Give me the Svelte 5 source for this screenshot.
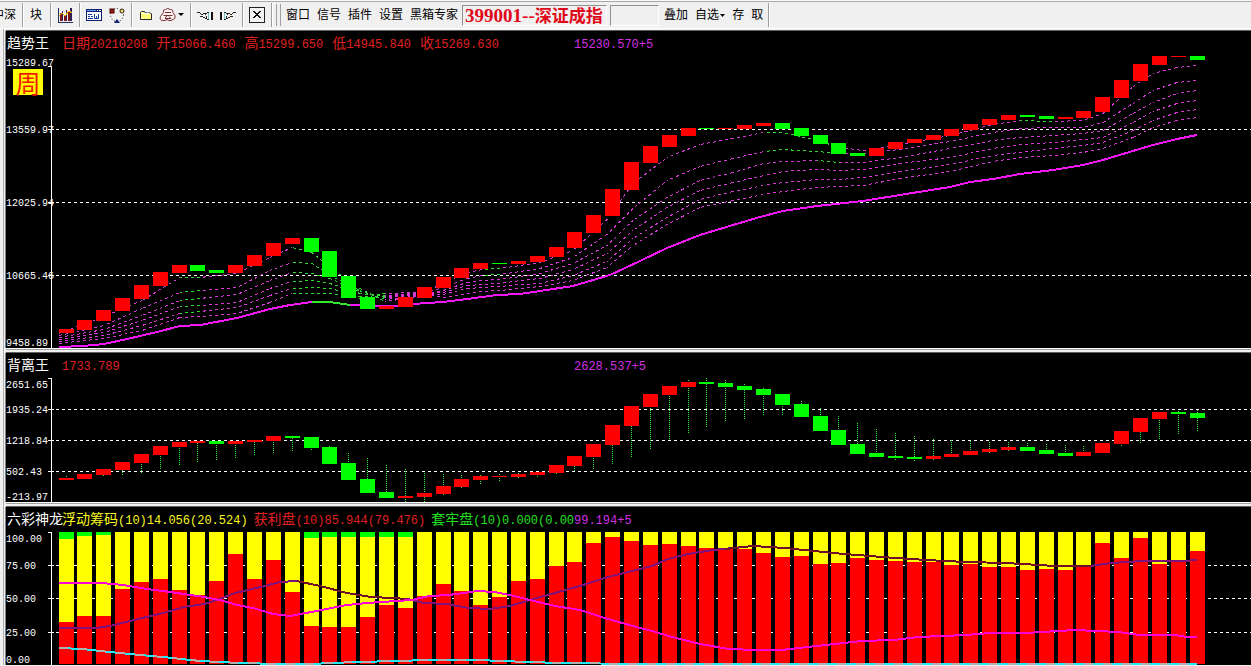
<script>
  const barX = (i) => Math.floor(59 + 18.85 * i);

  // [top, bottom, falling]
  const trend = [
    [329,333],[320,330],[310,321],[298,311],[285,299],[272,286],[265,273],[265,271,1],[270,273,1],[265,273],
    [255,266],[243,256],[238,244],[238,252,1],[251,277,1],[276,298,1],[297,309,1],[306,309],[297,307],[287,298],
    [277,288],[268,278],[263,269],[263,264,1],[261,264],[256,262],[247,257],[232,248],[215,233],[189,216],
    [162,190],[146,163],[135,147],[128,136],[128,129,1],[128,129],[125,129],[123,126],[123,129,1],[128,136,1],
    [135,144,1],[143,154,1],[153,156,1],[148,156],[142,149],[139,143],[135,140],[129,136],[124,130],[119,125],
    [115,120],[115,117,1],[116,119,1],[117,119],[111,118],[97,112],[80,98],[64,81],[56,65],[56,57],[56,60,1]
  ];

  // [x, six averages from fast to slow]
  const ribbon = [
    [59,333,335,337,339,341,343],[104,316,325,329,332,335,338],[142,300,308,315,320,325,330],
    [180,277,292,300,306,313,317],[200,277,290,298,305,311,316],[237,273,287,294,302,307,313],
    [270,257,270,280,288,295,302],[292,247,262,272,281,288,293],[312,252,263,273,280,287,293],
    [330,267,275,278,283,288,293],[360,288,290,291,293,296,298],[385,301,299,297,296,295,293],
    [413,297,296,295,294,293,292],[443,283,287,290,292,294,297],[467,272,278,282,285,288,293],
    [483,269,275,280,284,287,291],[500,268,274,279,283,286,290],[520,265,271,276,280,284,288],
    [540,262,268,273,278,283,286],[573,250,257,263,269,275,280],[607,219,234,245,253,261,267],
    [633,183,208,220,230,238,245],[667,157,180,197,207,217,224],[700,144,166,180,190,199,207],
    [733,138,158,172,182,191,200],[764,132,151,163,175,185,194],[783,132,149,161,171,182,191],
    [817,140,151,160,169,179,187],[840,147,153,162,170,179,186],[863,150,153,162,169,177,185],
    [900,144,149,157,163,171,178],[950,135,141,148,157,164,171],[993,124,132,140,148,155,161],
    [1020,120,128,137,144,152,157],[1053,121,127,135,142,148,155],[1083,120,127,133,139,145,152],
    [1103,113,122,130,137,142,148],[1133,86,103,113,122,130,137],[1153,73,90,102,111,120,127],
    [1177,67,82,93,103,112,120],[1197,65,80,90,100,109,117]
  ];
  const isGreen = (x, k) =>
    (x === 180 && k < 5) || (x >= 292 && x < 385) || (x === 483 && k < 2) ||
    (x >= 764 && x < 840 && k < 2) || (x === 817 && k === 2) || (x === 1020 && k === 0);
  const segments = [];
  for (let k = 0; k < 6; k++) {
    for (let i = 0; i + 1 < ribbon.length; i++) {
      const a = ribbon[i], b = ribbon[i + 1];
      segments.push({ x1: a[0], y1: a[k + 1], x2: b[0], y2: b[k + 1], green: isGreen(a[0], k) });
    }
  }

  const base = '59,347 83,346 104,344 127,339 157,332 180,326 200,325 237,318 270,309 290,305 312,302 330,302 350,305 393,306 413,304 443,302 467,299 497,295 520,294 540,291 573,286 610,275 640,261 667,248 700,235 733,225 760,217 783,211 817,206 863,201 900,195 950,187 970,182 993,179 1020,174 1053,170 1083,165 1103,160 1133,151 1153,145 1177,139 1197,135';

  // [top, bottom, falling, wick top, wick bottom]
  const diverge = [
    [478,480,0,476,480],[474,479,0,474,479],[469,475,0,469,477],[462,470,0,462,475],[454,463,0,454,473],
    [446,455,0,446,469],[442,447,0,442,466],[441,443,0,441,463],[441,444,1,441,460],[441,444,0,441,458],
    [440,442,0,440,456],[436,441,0,436,454],[436,438,1,436,452],[437,448,1,437,451],[447,464,1,446,464],
    [463,480,1,453,480],[479,493,1,458,493],[492,498,1,465,498],[496,498,0,469,502],[493,497,0,473,502],
    [486,494,0,474,496],[479,487,0,475,489],[476,480,0,475,484],[476,477,0,474,481],[474,477,0,473,478],
    [472,475,0,472,477],[465,473,0,465,475],[456,466,0,456,471],[444,457,0,444,469],[425,445,0,425,464],
    [406,426,0,406,457],[394,407,0,394,449],[386,395,0,386,440],[382,387,0,380,433],[382,384,1,378,427],
    [383,387,1,380,422],[386,390,1,384,419],[389,395,1,388,416],[394,405,1,394,415],[404,417,1,401,417],
    [416,431,1,408,431],[430,445,1,416,445],[444,454,1,423,454],[453,457,1,429,457],[456,458,1,433,461],
    [457,459,1,436,461],[456,459,0,439,460],[454,457,0,440,458],[451,455,0,441,455],[449,452,0,442,453],
    [447,450,0,442,451],[447,451,1,443,451],[450,454,1,444,454],[453,456,1,445,456],[452,456,0,446,456],
    [443,453,0,443,453],[431,444,0,431,447],[418,432,0,418,443],[412,419,0,412,439],[412,414,1,411,435],
    [413,418,1,410,432]
  ];

  const profit = [
    622,616,616,589,582,579,590,595,581,554,579,560,592,626,627,627,617,605,608,596,584,591,605,597,581,579,566,562,543,537,
    541,545,544,546,548,549,549,553,557,556,564,563,558,560,561,562,562,565,564,567,567,570,569,570,566,543,558,538,564,561,551
  ];
  const locked = { 0: 539, 1: 536, 2: 535, 13: 538, 14: 537, 15: 537, 16: 537, 17: 537, 18: 537 };

  const purple = '59,628 96,628 110,626 130,621 163,613 184,607 204,604 220,599 235,593 265,586 280,582 297,581 320,586 347,593 371,597 392,598 408,599 424,603 447,604 469,608 490,609 510,606 530,600 551,594 580,586 608,577 640,569 652,566 668,559 688,554 713,550 753,546 785,548 833,553 882,557 926,560 966,562 1006,563 1055,566 1091,566 1111,563 1143,561 1183,561 1197,560';
  const maroon = ['297,581 320,586 347,593 371,597 392,598 408,599', '725,549 753,546 785,548 833,553 882,557 926,560 966,562 1006,563 1055,566 1091,566'];
  const pink = '59,583 102,583 123,585 147,589 163,591 184,594 204,597 220,600 237,605 253,608 273,614 290,616 306,613 347,605 367,603 412,600 429,596 449,595 478,591 494,592 510,595 530,600 555,606 580,610 608,619 640,628 652,631 672,637 700,644 729,649 757,650 781,650 817,646 861,641 894,640 918,637 966,635 990,633 1026,633 1075,630 1119,632 1139,635 1175,635 1187,637 1197,637';
  const cyan = '59,648 82,649 100,651 140,655 163,657 200,661 240,663 280,664 310,664 355,662 400,661 424,660 480,660 500,661 560,663 640,664 1197,664';

  const panels = [
    {
      id: 'trend', name: '趋势王', tone: 'red', latest: '15230.570+5', top: 53, height: 295, axisTop: 66,
      readings: [['日期', '20210208'], ['开', '15066.460'], ['高', '15299.650'], ['低', '14945.840'], ['收', '15269.630']],
      labels: [['15289.67', 62], ['13559.97', 129], ['12025.94', 202], ['10665.46', 275], ['9458.89', 342]],
      grid: [129, 202, 275]
    },
    {
      id: 'diverge', name: '背离王', tone: 'red', latest: '2628.537+5', top: 375, height: 127, axisTop: 378,
      readings: [['', '1733.789']],
      labels: [['2651.65', 384], ['1935.24', 409], ['1218.84', 440], ['502.43', 471], ['-213.97', 496]],
      grid: [409, 440, 471]
    },
    {
      id: 'chips', name: '六彩神龙', tone: 'multi', latest: '99.194+5', top: 529, height: 136, axisTop: 532,
      readings: [['浮动筹码', '(10)14.056(20.524)'], ['获利盘', '(10)85.944(79.476)'], ['套牢盘', '(10)0.000(0.00']],
      labels: [['100.00', 538], ['75.00', 565], ['50.00', 598], ['25.00', 632], ['0.00', 659]],
      grid: [565, 598, 632]
    }
  ];
</script>

<div class="app">
  <header class="toolbar">
    <div class="group first"><button>中深</button></div>
    <div class="group text"><button>块</button></div>
    <div class="group">
      <button aria-label="K线图">
        <svg width="16" height="16" shape-rendering="crispEdges">
          <path d="M1 1v14h15" stroke="#203060" fill="none" />
          <path d="M3 6h2v8h-2zM7 8h2v6h-2zM11 5h2v9h-2z" fill="#801818" />
          <path d="M5 4h1v10h-1zM9 3h1v11h-1zM13 1h2v13h-2z" fill="#302050" />
          <path d="M2 9l3-3 3 3 4-5 3 2" stroke="#f0b000" fill="none" />
        </svg>
      </button>
    </div>
    <div class="group">
      <button aria-label="报表">
        <svg width="16" height="16" shape-rendering="crispEdges">
          <path d="M0 2h16v12H0z" fill="#102070" /><path d="M1 5h14v8H1z" fill="#fff" />
          <path d="M1 3h9v1H1z" fill="#68a0f0" /><path d="M11 3h1v1h-1zM13 3h2v1h-2z" fill="#fff" />
          <path d="M2 7h4v1H2zM2 9h2v1H2zM5 9h2v1H5zM2 11h5v1H2zM8 7h1v5H8zM10 9h1v3h-1zM12 7h1v5h-1zM8 11h5v1H8z" fill="#1840a0" />
        </svg>
      </button>
      <button aria-label="流程">
        <svg width="16" height="16">
          <circle cx="8" cy="8" r="6.500" fill="none" stroke="#222" stroke-dasharray="1 2" />
          <rect x="1" y="2" width="4" height="4" fill="#a01818" stroke="#400" />
          <circle cx="13" cy="4" r="2" fill="#ffe060" stroke="#222" />
          <path d="M8 12l3 4H5z" fill="#102080" />
        </svg>
      </button>
    </div>
    <div class="group cloud">
      <button aria-label="打开">
        <svg width="16" height="16"><path d="M2.500 12.500v-7l1-1h3l1 1.500h5l1 1v5.500z" fill="#ffff80" stroke="#222" /><path d="M3.500 6.500h8" stroke="#fff" /></svg>
      </button>
      <button class="drop" aria-label="云端">
        <svg width="18" height="16">
          <path d="M4.500 5.500q-1-3 2-3l2-1 3 1q3 0 2.500 3l2 3q1 3-2 4l-2 1h-2l-2-1-2 1h-2q-4 0-2.500-4z" fill="#fff4ee" stroke="#7a3038" />
          <path d="M6 5.500h6M4.500 8.500h9M8 8.500l-2 3h6l-2-2" fill="none" stroke="#7a3038" />
        </svg>
        <svg class="arrow" width="6" height="4"><path d="M0 0h6l-3 3z" /></svg>
      </button>
    </div>
    <div class="group">
      <button aria-label="向左">
        <svg width="16" height="16" shape-rendering="crispEdges">
          <path d="M0 5h3v1H0zM3 6h1v1H3zM4 7h2v1H4zM6 6h4v1H6zM3 9h3v1H3zM6 10h2v1H6zM8 7h1v1H8zM8 11h2v1H8zM10 5h2v1h-2zM10 12h2v1h-2zM9 9h1v2H9z" fill="#222" />
          <path d="M11 6h1v6h-1z" fill="#70c8c8" /><path d="M14 5h2v8h-2z" fill="#111" />
        </svg>
      </button>
      <button aria-label="向右">
        <svg width="16" height="16" shape-rendering="crispEdges">
          <path d="M13 5h3v1h-3zM12 6h1v1h-1zM10 7h2v1h-2zM6 6h4v1H6zM10 9h3v1h-3zM8 10h2v1H8zM7 7h1v1H7zM6 11h2v1H6zM4 5h2v1H4zM4 12h2v1H4zM6 9h1v2H6z" fill="#222" />
          <path d="M4 6h1v6H4z" fill="#70c8c8" /><path d="M0 5h2v8H0z" fill="#111" />
        </svg>
      </button>
    </div>
    <div class="group">
      <button aria-label="关闭">
        <svg width="16" height="16" shape-rendering="crispEdges"><path d="M.5.5h15v15H.5z" fill="#f4f4f4" stroke="#222" /><path d="M4 4l7 7M11 4l-7 7M5 4l7 7M12 4l-7 7" stroke="#111" /></svg>
      </button>
    </div>
    <div class="grip"></div>
    <nav class="menu">
      <button>窗口</button><button>信号</button><button>插件</button><button>设置</button><button>黑箱专家</button>
    </nav>
    <output class="field symbol">399001--<b>深证成指</b></output>
    <input class="field search" aria-label="代码" />
    <div class="group tail">
      <button>叠加</button>
      <button class="drop">自选<svg class="arrow" width="5" height="3"><path d="M0 0h5l-2.500 3z" /></svg></button>
      <button>存</button><button>取</button>
    </div>
  </header>

  <main>
    {#each panels as p}
      <section class="panel {p.id}">
        <div class="head">
          <div class="info">
            <h2>{p.name}</h2>
            <div class="readings {p.tone}">
              {#each p.readings as [k, v]}<span>{k}<i>{v}</i></span>{/each}
            </div>
          </div>
          <div class="latest"><i>{p.latest}</i></div>
        </div>
        <div class="body">
          <svg class="axis" width="48" height={p.height} viewBox="6 {p.top} 48 {p.height}" shape-rendering="crispEdges">
            <path d="M48 {p.axisTop + 0.5}H51.500V{p.top + p.height}" fill="none" stroke="#fff" />
            {#each p.grid as y}<path d="M48 {y + 0.5}h6" stroke="#fff" />{/each}
            {#each p.labels as [t, y]}<text x="6" y={y + 4}>{t}</text>{/each}
          </svg>
          <svg class="plot" height={p.height} viewBox="54 {p.top} 1197 {p.height}" preserveAspectRatio="none" shape-rendering="crispEdges">
            {#each p.grid as y}<path class="grid" d="M56 {y + 0.5}H1251" />{/each}
            {#if p.id === 'trend'}
              {#each segments as s}
                <line class="avg" class:green={s.green} x1={s.x1} y1={s.y1 + 0.5} x2={s.x2} y2={s.y2 + 0.5} stroke-dashoffset={(s.x1 - 59) % 6} />
              {/each}
              <polyline points={base} stroke="#f416f4" stroke-width="2" />
              <polyline points="312,302 330,302 350,305" stroke="#30e830" stroke-width="2" />
              {#each trend as [t, b, g], i}
                <rect x={barX(i)} y={t} width="15" height={b - t} fill={g ? '#00ff00' : '#ff0000'} />
              {/each}
            {:else if p.id === 'diverge'}
              {#each diverge as [t, b, g, w1, w2], i}
                <path class="wick" d="M{barX(i) + 7.5} {w1}V{w2}" />
                <rect x={barX(i)} y={t} width="15" height={b - t} fill={g ? '#00ff00' : '#ff0000'} />
              {/each}
            {:else}
              {#each profit as y, i}
                <rect x={barX(i)} y="532" width="15" height={y - 532} fill="#ffff00" />
                <rect x={barX(i)} y={y} width="15" height={664 - y} fill="#ff0000" />
                {#if locked[i]}<rect x={barX(i)} y="532" width="15" height={locked[i] - 532} fill="#00ff00" />{/if}
              {/each}
              <polyline points={purple} stroke="#80107c" stroke-width="2" />
              {#each maroon as m}<polyline points={m} stroke="#701028" stroke-width="2" />{/each}
              <polyline points={pink} stroke="#ff00d8" stroke-width="2" />
              <polyline points={cyan} stroke="#20e8f4" stroke-width="2" />
              <polyline points={cyan} stroke="#b0b0b0" stroke-width="2" stroke-dasharray="9 10" />
            {/if}
          </svg>
        </div>
        {#if p.id === 'trend'}<strong class="badge">周</strong>{/if}
      </section>
    {/each}
  </main>
</div>

<style>
  :global(body) { background: #f0f0f0; overflow: hidden; }
  .app { font-family: "Liberation Sans", "Noto Sans CJK SC", sans-serif; font-size: 12px; color: #000; }
  .toolbar {
    box-sizing: border-box; display: flex; align-items: center; height: 29px; padding-top: 1px;
    background: #f0f0f0; border-top: 1px solid #fafafa; border-bottom: 1px solid #fff;
    box-shadow: inset 0 1px #a8a8a8; overflow: hidden; white-space: nowrap;
  }
  button { display: flex; align-items: center; padding: 0; border: 0; background: none; font: inherit; line-height: 16px; color: #000; }
  .group { box-sizing: border-box; flex: none; display: flex; align-items: center; gap: 7px; height: 24px; padding: 0 6px; border-right: 1px solid #a0a0a0; box-shadow: 1px 0 #fff; }
  .text { padding: 0 8px 0 7px; }
  .first { width: 23px; justify-content: flex-end; }
  .cloud { gap: 5px; }
  .drop { gap: 1px; }
  .grip { width: 3px; height: 22px; margin: 0 5px 0 4px; border-left: 1px solid #a0a0a0; border-right: 1px solid #a0a0a0; }
  .menu { display: flex; gap: 7px; }
  .field { box-sizing: border-box; height: 21px; border: 1px solid; border-color: #909090 #fff #fff #909090; background: #f0f0f0; border-radius: 0; }
  .symbol { width: 145px; margin-left: 4px; padding-left: 2px; font: bold 19px/18px "Liberation Serif", serif; color: #e00818; }
  .symbol b { font: bold 17px/18px "Noto Sans CJK SC", sans-serif; }
  .search { width: 49px; margin-left: 3px; }
  .tail { padding: 0 5px; }

  main { display: flex; flex-direction: column; gap: 5px; padding: 2px 0 0 6px; background: #f0f0f0; box-shadow: inset 3px 0 #f0f0f0, inset 4px 0 #b0b0b0; }
  .panel { position: relative; background: #000; box-shadow: 0 -1px #606060, -1px 0 #808080, 0 1px #fff, 0 2px #a0a0a0; }
  .head { display: grid; grid-template-columns: 568px 1fr; height: 22px; font-size: 14px; line-height: 24px; overflow: hidden; white-space: nowrap; }
  .info { display: flex; overflow: hidden; padding-left: 1px; }
  h2 { flex: none; width: 55px; margin: 0; font-size: 14px; font-weight: 400; color: #fff; }
  i { font: 12px/24px "Liberation Mono", monospace; }
  .readings { display: flex; gap: 9px; color: #e02020; }
  .multi { gap: 6px; }
  .multi span:nth-child(1) { color: #f8f820; }
  .multi span:nth-child(3) { color: #20e020; }
  .latest { color: #d030e0; }
  .body { display: flex; }
  .body svg { display: block; }
  .axis { flex: none; overflow: visible; }
  .axis text { font: 10px "Liberation Mono", monospace; fill: #fff; }
  .plot { flex: 1; min-width: 0; width: 100%; }
  polyline { fill: none; }
  .grid { stroke: #fff; stroke-dasharray: 3 3; }
  .avg { stroke: #d838d8; stroke-dasharray: 3 3; }
  .avg.green { stroke: #30d830; }
  .wick { stroke: #38f038; stroke-dasharray: 1 1; }
  .badge { position: absolute; left: 7px; top: 38px; width: 30px; height: 26px; background: #ff0; color: #f01800; font: 400 25px/26px "Noto Sans CJK SC", sans-serif; text-align: center; }
</style>
